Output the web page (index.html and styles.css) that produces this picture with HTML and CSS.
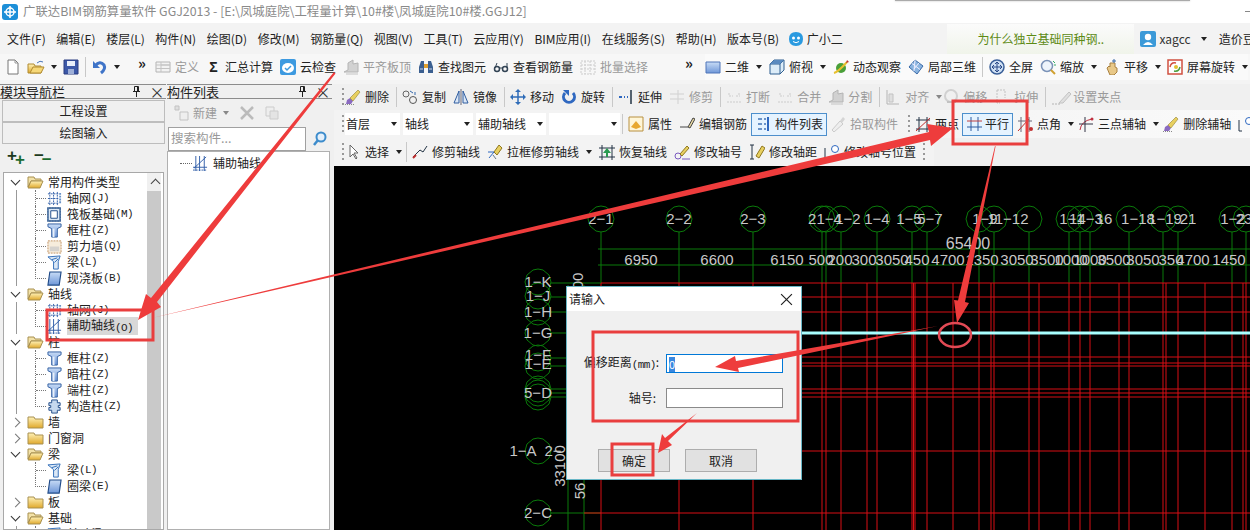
FILE: index.html
```html
<!DOCTYPE html>
<html lang="zh-CN">
<head>
<meta charset="utf-8">
<title>广联达BIM钢筋算量软件 GGJ2013</title>
<link rel="stylesheet" href="styles.css">
</head>
<body>
<svg class="defs" aria-hidden="true">
<defs>
<linearGradient id="gb" x1="0" y1="0" x2="0" y2="1"><stop offset="0" stop-color="#c8dcf6"/><stop offset="1" stop-color="#6f97d8"/></linearGradient>
<linearGradient id="gy" x1="0" y1="0" x2="0" y2="1"><stop offset="0" stop-color="#fff2b8"/><stop offset="1" stop-color="#e0a92c"/></linearGradient>
<symbol id="i-new" viewBox="0 0 16 16"><path d="M3 1h7l3 3v11H3z" fill="#fff" stroke="#777"/><path d="M10 1v3h3" fill="none" stroke="#999"/></symbol>
<symbol id="i-open" viewBox="0 0 18 16"><path d="M1 5h6l1 2h6v7H1z" fill="url(#gy)" stroke="#b08a30"/><path d="M3 14l3-6h11l-3 6z" fill="#f6d878" stroke="#b08a30"/><path d="M10 4q3-3 6-1" fill="none" stroke="#4a76b8"/></symbol>
<symbol id="i-save" viewBox="0 0 16 16"><path d="M1 1h14v14H1z" fill="#3c58a8" stroke="#2a3c80"/><path d="M4 2h8v5H4z" fill="#e8eefa"/><path d="M5 10h6v5H5z" fill="#9fb0d8"/></symbol>
<symbol id="i-undo" viewBox="0 0 16 16"><path d="M3 7q5-6 9-1 2 4-3 8" fill="none" stroke="#3f74c8" stroke-width="3"/><path d="M1 2v7h7z" fill="#3f74c8"/></symbol>
<symbol id="i-define" viewBox="0 0 16 16"><path d="M1 3h14v10H1z" fill="#f2f2f2" stroke="#aaa"/><path d="M6 3v10M1 6h14M1 9.500h14M6 6h9" stroke="#bbb" fill="none"/></symbol>
<symbol id="i-cloud" viewBox="0 0 16 16"><rect width="16" height="16" rx="2" fill="#3d9ae0"/><ellipse cx="8" cy="9" rx="6" ry="5" fill="#fff"/><path d="M5 9l2 2 4-4" fill="none" stroke="#3d9ae0" stroke-width="1.500"/></symbol>
<symbol id="i-flat" viewBox="0 0 16 16"><path d="M1 13l4-2v-7l5-3v4l5-1v9H1z" fill="#ccc" stroke="#aaa"/><path d="M3 15h12" stroke="#bbb"/></symbol>
<symbol id="i-bin" viewBox="0 0 16 16"><path d="M1 8l2-6h3v12H1zM15 8l-2-6h-3v12h5z" fill="#3b5f90"/><path d="M6 5h4v4H6z" fill="#e0a030"/><path d="M2 10h3M11 10h3" stroke="#cfd8e8"/></symbol>
<symbol id="i-look" viewBox="0 0 16 16"><circle cx="4" cy="10" r="2.500" fill="none" stroke="#345" stroke-width="1.500"/><circle cx="12" cy="10" r="2.500" fill="none" stroke="#345" stroke-width="1.500"/><path d="M6 9h4M14 9V4M2 9l2-5" fill="none" stroke="#345"/></symbol>
<symbol id="i-batch" viewBox="0 0 16 16"><path d="M1 2h14v13H1zM1 6h14M1 10h14M5 2v13M10 2v13" fill="none" stroke="#c6c6c6" stroke-dasharray="2 1"/></symbol>
<symbol id="i-2d" viewBox="0 0 16 16"><path d="M1 3h14v11H1z" fill="url(#gb)" stroke="#4f74b8"/></symbol>
<symbol id="i-cube" viewBox="0 0 16 16"><path d="M1 5l4-4h10v10l-4 4H1z" fill="#dcecf8" stroke="#2f5f90"/><path d="M1 5h10v10M11 5l4-4" fill="none" stroke="#2f5f90"/><path d="M5 1h10l-4 4H1z" fill="#5b8bc0"/></symbol>
<symbol id="i-orbit" viewBox="0 0 16 16"><circle cx="8" cy="9" r="5" fill="#4aa03a"/><path d="M1 14q4-1 13-11" fill="none" stroke="#e8c030" stroke-width="2"/><path d="M14 1l2 2-3 1z" fill="#c03030"/></symbol>
<symbol id="i-l3d" viewBox="0 0 16 16"><path d="M1 8l6-7 8 6-6 8z" fill="#8ab4e0" stroke="#3a6aa8"/><path d="M4 4.500l8 6M7 1l-1 11M11 4l-5 6" stroke="#eef" fill="none"/></symbol>
<symbol id="i-full" viewBox="0 0 16 16"><circle cx="8" cy="8" r="7" fill="#cfe0f4" stroke="#3a5f98" stroke-width="1.500"/><path d="M8 3v10M3 8h10M8 3l-2 2M8 3l2 2M8 13l-2-2M8 13l2-2M3 8l2-2M3 8l2 2M13 8l-2-2M13 8l-2 2" stroke="#2a4a88" fill="none"/></symbol>
<symbol id="i-zoom" viewBox="0 0 16 16"><circle cx="7" cy="7" r="5.500" fill="#eef4fb" stroke="#7b93b8" stroke-width="1.500"/><path d="M11 11l4 4" stroke="#d0a030" stroke-width="2"/><path d="M13 2l2 2M14 6h2" stroke="#3a6"/></symbol>
<symbol id="i-pan" viewBox="0 0 16 16"><path d="M3 9l2-2 1 1V4h5v4l2 1v4l-3 3H6z" fill="#e8c888" stroke="#a88040"/><path d="M10 0v4M8 2h4" stroke="#3a6aa8"/></symbol>
<symbol id="i-scr" viewBox="0 0 16 16"><rect x="1" y="1" width="14" height="14" fill="#fff" stroke="#d05040" stroke-width="1.500"/><path d="M3 8q1-5 6-4" fill="none" stroke="#d05040" stroke-width="1.500"/><path d="M13 8q-1 5-6 4" fill="none" stroke="#50a040" stroke-width="1.500"/><circle cx="9" cy="8" r="2" fill="#e0c030"/></symbol>
<symbol id="i-del" viewBox="0 0 16 16"><path d="M1 15l1-4 3-2 3 3-2 3z" fill="#8a6ac0"/><path d="M5 9l8-8 2 2-7 9z" fill="#e8d060" stroke="#807020" stroke-width=".5"/><path d="M0 15.500h10" stroke="#888" stroke-dasharray="1 1"/></symbol>
<symbol id="i-copy" viewBox="0 0 16 16"><circle cx="4" cy="5" r="3" fill="none" stroke="#666"/><circle cx="11" cy="11" r="3.500" fill="none" stroke="#555"/><path d="M8 2l3 2M13 3v3" stroke="#36a" fill="none"/></symbol>
<symbol id="i-mirror" viewBox="0 0 16 16"><path d="M1 14L6 2v12zM15 14L10 2v12z" fill="#dbe7f6" stroke="#2f5da0"/><path d="M8 0v16" stroke="#667"/></symbol>
<symbol id="i-move" viewBox="0 0 16 16"><path d="M8 1v14M1 8h14" stroke="#2f6cb8" stroke-width="1.500"/><path d="M8 0l-3 3h6zM8 16l-3-3h6zM0 8l3-3v6zM16 8l-3-3v6z" fill="#2f6cb8"/></symbol>
<symbol id="i-rot" viewBox="0 0 16 16"><path d="M4 4a5.500 5.500 0 1 0 8 0" fill="none" stroke="#2f68c0" stroke-width="3"/><path d="M2 1h6v6z" fill="#2f68c0"/></symbol>
<symbol id="i-ext" viewBox="0 0 16 16"><path d="M13 1v14" stroke="#234" stroke-width="1.500"/><path d="M1 7h3v2H1zM6 7h1v2H6zM9 7h1v2H9z" fill="#2f68c0"/></symbol>
<symbol id="i-trim" viewBox="0 0 16 16"><path d="M9 1v14M1 5h14M1 10h14" stroke="#ccc" fill="none"/></symbol>
<symbol id="i-brk" viewBox="0 0 16 16"><path d="M1 13h14M3 7h4M10 7h4M3 4v3M13 4v3" stroke="#c8c8c8" fill="none" stroke-dasharray="2 1"/></symbol>
<symbol id="i-align" viewBox="0 0 16 16"><path d="M2 1v14h12" fill="none" stroke="#aaa"/><path d="M4 5h4v8H4z" fill="#ddd" stroke="#bbb"/></symbol>
<symbol id="i-off" viewBox="0 0 16 16"><circle cx="8" cy="7" r="6" fill="none" stroke="#ccc" stroke-width="2"/><path d="M4 13h9" stroke="#bbb" stroke-width="2"/></symbol>
<symbol id="i-str" viewBox="0 0 16 16"><path d="M3 1h8v8M3 1v13h3" fill="none" stroke="#bbb" stroke-dasharray="2 1"/><path d="M9 12h6" stroke="#bbb"/></symbol>
<symbol id="i-grip" viewBox="0 0 22 16"><path d="M8 14l10-11 2 2-8 9z" fill="#ddd" stroke="#bbb"/><path d="M1 15h8" stroke="#aaa" stroke-dasharray="2 1"/></symbol>
<symbol id="i-prop" viewBox="0 0 16 16"><path d="M1 1h14v14H1z" fill="#fff6d8" stroke="#b89040"/><path d="M3 11l5-6 5 6-5 2z" fill="#e8a830"/></symbol>
<symbol id="i-bar" viewBox="0 0 16 16"><path d="M1 11h8M9 11l5-9 2 1-5 9z" fill="#e8d8a0" stroke="#444"/></symbol>
<symbol id="i-list" viewBox="0 0 16 16"><path d="M12 1v14" stroke="#2f68c0" stroke-width="2"/><path d="M2 2h4v2H2zM8 2h2v2H8zM2 7h4v2H2zM8 7h2v2H8zM2 12h4v2H2zM8 12h2v2H8z" fill="#6a93c8"/></symbol>
<symbol id="i-pick" viewBox="0 0 16 16"><path d="M2 14l8-9 3 3-9 8z" fill="#eee" stroke="#c4c4c4"/><path d="M10 5l3-4 2 2-3 4z" fill="#d0d0d0"/></symbol>
<symbol id="i-two" viewBox="0 0 16 16"><path d="M4 1v15M12 1v15M1 13h14M1 4h14" stroke="#234" fill="none"/><path d="M1 15L15 2" stroke="#c03030"/></symbol>
<symbol id="i-par" viewBox="0 0 16 16"><path d="M4 1v14M11 1v14" stroke="#2f5da0" fill="none"/><path d="M0 5h15" stroke="#c04040"/><path d="M0 11h15" stroke="#2f5da0"/></symbol>
<symbol id="i-ang" viewBox="0 0 16 16"><path d="M4 1v15M12 1v15M1 5h14" stroke="#667" fill="none"/><path d="M1 15L12 3" stroke="#c03030"/><circle cx="14" cy="13" r="2" fill="#c03030"/></symbol>
<symbol id="i-three" viewBox="0 0 16 16"><path d="M2 14q1-9 12-11" fill="none" stroke="#c03040"/><path d="M7 1v15M1 8h14" stroke="#334"/><circle cx="14" cy="3" r="1.500" fill="#c03040"/></symbol>
<symbol id="i-cur" viewBox="0 0 16 16"><path d="M5 1v12l3-3 3 5 1-1-3-5h4z" fill="#fff" stroke="#666"/></symbol>
<symbol id="i-cut" viewBox="0 0 16 16"><path d="M1 13l7-7 3 2 4-6" fill="none" stroke="#234"/><path d="M1 14l3-3" stroke="#c03030" stroke-width="2"/></symbol>
<symbol id="i-box" viewBox="0 0 16 16"><path d="M1 8h6M2 14l5-6" stroke="#2f68c0"/><path d="M7 8l5-7 3 3-5 7z" fill="#e8d060" stroke="#907820"/><path d="M6 11l3 4" stroke="#678"/></symbol>
<symbol id="i-res" viewBox="0 0 16 16"><path d="M3 1v15M13 1v15M0 4h16M0 13h16" stroke="#234" fill="none"/><path d="M8 4l4 5H9v4H7V9H4z" fill="#2a9a50"/></symbol>
<symbol id="i-num" viewBox="0 0 16 16"><circle cx="4" cy="12" r="3" fill="none" stroke="#7a5ac0"/><path d="M6 10l7-8 2 2-7 8z" fill="#e8d060" stroke="#907820"/><path d="M8 15h8" stroke="#7a5ac0"/></symbol>
<symbol id="i-dist" viewBox="0 0 16 16"><path d="M1 1h4M1 15h4M3 1v14" stroke="#234"/><path d="M7 12l6-10 3 2-6 10z" fill="#e8d060" stroke="#907820"/></symbol>
<symbol id="i-npos" viewBox="0 0 16 16"><path d="M1 4v11h3" fill="none" stroke="#234"/><circle cx="11" cy="5" r="3.500" fill="#fff" stroke="#2f68c0"/></symbol>
<symbol id="i-add" viewBox="0 0 16 16"><path d="M2 1h4v4H2z" fill="#ddd" stroke="#bbb"/><path d="M7 7h8v8H7z" fill="#eee" stroke="#bbb"/></symbol>
<symbol id="i-x" viewBox="0 0 16 16"><path d="M2 2l12 12M14 2L2 14" stroke="#bbb" stroke-width="2.500"/></symbol>
<symbol id="i-dup" viewBox="0 0 16 16"><path d="M2 2h8v9H2z" fill="#eee" stroke="#ccc"/><path d="M6 6h8v8H6z" fill="#e4e4e4" stroke="#ccc"/></symbol>
<symbol id="i-search" viewBox="0 0 16 16"><circle cx="9" cy="6" r="4.500" fill="#e4f0fb" stroke="#3d8ccc" stroke-width="2"/><path d="M6 9l-4 5" stroke="#3d8ccc" stroke-width="2.500"/></symbol>
<symbol id="i-pin" viewBox="0 0 9 11"><path d="M2.500.5h4v5h-4zM1 5.500h7M4.500 6v5M5.500 1v4" fill="none" stroke="#222"/></symbol>
<symbol id="t-grid" viewBox="0 0 16 16"><path d="M1 3h12M1 8h12M1 13h12M3 1v14M7 1v14M11 1v14" stroke="#2f5da8" stroke-dasharray="2 1" fill="none"/><path d="M14 2v12" stroke="#6a93c8" stroke-width="2" stroke-dasharray="2 1"/></symbol>
<symbol id="t-axis" viewBox="0 0 16 16"><path d="M3 0v16M7 0v16M12 0v16M0 12h15" stroke="#2f5da8" fill="none"/><path d="M1 13L14 1" stroke="#2f5da8"/><path d="M0 15h15" stroke="#2f5da8" stroke-dasharray="2 1"/></symbol>
<symbol id="t-raft" viewBox="0 0 16 16"><path d="M1 1h13v14H1z" fill="#dbe8f6" stroke="#1f4a88" stroke-width="1.500"/><path d="M4 4h7v8H4z" fill="#fff" stroke="#1f4a88"/><path d="M1 1h13v14H1z" fill="none" stroke="#8ab" stroke-dasharray="1 2"/></symbol>
<symbol id="t-col" viewBox="0 0 16 16"><path d="M1 1h14v3l-4 2v9H5V6L1 4z" fill="url(#gb)" stroke="#2f5da0"/><path d="M7 6v9" stroke="#e8f0fa" stroke-width="2"/></symbol>
<symbol id="t-wall" viewBox="0 0 16 16"><path d="M1 2h14v13H1z" fill="#f6ecdc" stroke="#c09060" stroke-dasharray="2 1"/><path d="M3 8h10v5H3z" fill="#c8c8c8" opacity=".7"/></symbol>
<symbol id="t-beam" viewBox="0 0 16 16"><path d="M1 2l13-1-2 6v8H7V7z" fill="#dbe8f6" stroke="#2f6cb8"/><path d="M5 5l6-2M8 8l4-4" stroke="#2f6cb8"/></symbol>
<symbol id="t-slab" viewBox="0 0 16 16"><path d="M3 1h12l-2 14H1z" fill="url(#gb)" stroke="#1f4a88" stroke-width="1.200"/></symbol>
<symbol id="t-con" viewBox="0 0 16 16"><path d="M5 1h6v3h3v3h-2v2h2v3h-3v3H5v-3H2V9h2V7H2V4h3z" fill="#c6d8ee" stroke="#1f4a88"/></symbol>
<symbol id="t-fo" viewBox="0 0 17 14"><path d="M1 2h6l1 2h6v2H4L1 12z" fill="#f3e2a8" stroke="#a89050"/><path d="M1 13l3-7h12l-3 7z" fill="url(#gy)" stroke="#a89050"/></symbol>
<symbol id="t-fc" viewBox="0 0 17 14"><path d="M1 2h6l1 2h8v9H1z" fill="url(#gy)" stroke="#a89050"/></symbol>
<symbol id="bub" viewBox="0 0 26 26" overflow="visible"><path d="M8 1l5-1 5 1 6 5 2 7-2 7-6 5-5 1-5-1-6-5-2-7 2-7z" fill="none" stroke="#0a7a0a"/></symbol>
</defs>
</svg>

<div class="window">
<header class="titlebar">
  <svg class="app-logo" viewBox="0 0 16 16"><rect width="16" height="16" rx="3" fill="#1c8fd8"/><circle cx="8" cy="8" r="4" fill="none" stroke="#fff" stroke-width="1.500"/><path d="M8 2v12M2 8h12" stroke="#fff" stroke-width="1.500"/></svg>
  <span>广联达BIM钢筋算量软件 GGJ2013 - [E:\凤城庭院\工程量计算\10#楼\凤城庭院10#楼.GGJ12]</span>
  <i class="window-shadow"></i>
  <i class="minimize"></i>
</header>

<nav class="menubar">
  <span class="m">文件(F)</span><span class="m">编辑(E)</span><span class="m">楼层(L)</span><span class="m">构件(N)</span><span class="m">绘图(D)</span><span class="m">修改(M)</span><span class="m">钢筋量(Q)</span><span class="m">视图(V)</span><span class="m">工具(T)</span><span class="m">云应用(Y)</span><span class="m">BIM应用(I)</span><span class="m">在线服务(S)</span><span class="m">帮助(H)</span><span class="m">版本号(B)</span>
  <span class="m helper"><svg class="ic" viewBox="0 0 16 16"><path d="M1 8q0-7 7-7t7 7-7 7-7-7z" fill="#2a9ae0"/><circle cx="5.500" cy="7" r="1.500" fill="#fff"/><circle cx="10.500" cy="7" r="1.500" fill="#fff"/><path d="M5 10.500q3 2.500 6 0" stroke="#fff" fill="none"/></svg>广小二</span>
  <span class="news">为什么独立基础同种钢..</span>
  <svg class="user-ic" viewBox="0 0 16 16"><rect width="16" height="16" rx="2" fill="#3c9ad8"/><circle cx="8" cy="6" r="3.200" fill="#fff"/><path d="M3 14q5-6 10 0z" fill="#fff"/></svg>
  <span class="user">xagcc</span><i class="caret"></i><span class="bean">造价豆</span>
</nav>

<div class="toolbar">
  <svg class="ic"><use href="#i-new"/></svg>
  <svg class="ic open"><use href="#i-open"/></svg><i class="caret"></i>
  <svg class="ic save"><use href="#i-save"/></svg>
  <i class="sep"></i>
  <svg class="ic"><use href="#i-undo"/></svg><i class="caret"></i>
  <b class="more">»</b>
  <div class="tgroup g1">
    <span class="tool off"><svg class="ic"><use href="#i-define"/></svg>定义</span>
    <span class="tool"><b class="sigma">Σ</b>汇总计算</span>
    <span class="tool"><svg class="ic"><use href="#i-cloud"/></svg>云检查</span>
    <span class="tool off"><svg class="ic"><use href="#i-flat"/></svg>平齐板顶</span>
    <span class="tool"><svg class="ic"><use href="#i-bin"/></svg>查找图元</span>
    <span class="tool"><svg class="ic"><use href="#i-look"/></svg>查看钢筋量</span>
    <span class="tool off"><svg class="ic"><use href="#i-batch"/></svg>批量选择</span>
  </div>
  <b class="more m2">»</b>
  <div class="tgroup g2">
    <span class="tool"><svg class="ic"><use href="#i-2d"/></svg>二维</span><i class="caret"></i>
    <span class="tool"><svg class="ic"><use href="#i-cube"/></svg>俯视</span><i class="caret"></i>
    <span class="tool"><svg class="ic"><use href="#i-orbit"/></svg>动态观察</span>
    <span class="tool"><svg class="ic"><use href="#i-l3d"/></svg>局部三维</span>
    <i class="sep"></i>
    <span class="tool"><svg class="ic"><use href="#i-full"/></svg>全屏</span>
    <span class="tool"><svg class="ic"><use href="#i-zoom"/></svg>缩放</span><i class="caret"></i>
    <span class="tool"><svg class="ic"><use href="#i-pan"/></svg>平移</span><i class="caret"></i>
    <span class="tool"><svg class="ic"><use href="#i-scr"/></svg>屏幕旋转</span><i class="caret"></i>
  </div>
</div>

<main class="main">
  <section class="nav">
    <div class="pane-head"><span>模块导航栏</span><svg class="pin"><use href="#i-pin"/></svg><span class="close">×</span></div>
    <button class="navbtn">工程设置</button>
    <button class="navbtn">绘图输入</button>
    <div class="treetools"><span class="pm">+<sub>+</sub></span><span class="pm">−<sub>−</sub></span></div>
    <div class="treebox">
      <div class="tree">
        <div class="row group open-g"><i class="chev down"></i><svg class="fold"><use href="#t-fo"/></svg>常用构件类型</div>
        <div class="row leaf v"><i class="guide"></i><svg class="ti"><use href="#t-grid"/></svg>轴网<em>(J)</em></div>
        <div class="row leaf v"><i class="guide"></i><svg class="ti"><use href="#t-raft"/></svg>筏板基础<em>(M)</em></div>
        <div class="row leaf v"><i class="guide"></i><svg class="ti"><use href="#t-col"/></svg>框柱<em>(Z)</em></div>
        <div class="row leaf v"><i class="guide"></i><svg class="ti"><use href="#t-wall"/></svg>剪力墙<em>(Q)</em></div>
        <div class="row leaf v"><i class="guide"></i><svg class="ti"><use href="#t-beam"/></svg>梁<em>(L)</em></div>
        <div class="row leaf v last"><i class="guide"></i><svg class="ti"><use href="#t-slab"/></svg>现浇板<em>(B)</em></div>
        <div class="row group"><i class="chev down"></i><svg class="fold"><use href="#t-fo"/></svg>轴线</div>
        <div class="row leaf v"><i class="guide"></i><svg class="ti"><use href="#t-grid"/></svg>轴网<em>(J)</em></div>
        <div class="row leaf v last"><i class="guide"></i><svg class="ti"><use href="#t-axis"/></svg><span class="sel">辅助轴线<em>(O)</em></span></div>
        <div class="row group"><i class="chev down"></i><svg class="fold"><use href="#t-fo"/></svg>柱</div>
        <div class="row leaf v"><i class="guide"></i><svg class="ti"><use href="#t-col"/></svg>框柱<em>(Z)</em></div>
        <div class="row leaf v"><i class="guide"></i><svg class="ti"><use href="#t-col"/></svg>暗柱<em>(Z)</em></div>
        <div class="row leaf v"><i class="guide"></i><svg class="ti"><use href="#t-col"/></svg>端柱<em>(Z)</em></div>
        <div class="row leaf v last"><i class="guide"></i><svg class="ti"><use href="#t-con"/></svg>构造柱<em>(Z)</em></div>
        <div class="row group"><i class="chev"></i><svg class="fold"><use href="#t-fc"/></svg>墙</div>
        <div class="row group"><i class="chev"></i><svg class="fold"><use href="#t-fc"/></svg>门窗洞</div>
        <div class="row group"><i class="chev down"></i><svg class="fold"><use href="#t-fo"/></svg>梁</div>
        <div class="row leaf"><i class="guide"></i><svg class="ti"><use href="#t-beam"/></svg>梁<em>(L)</em></div>
        <div class="row leaf last"><i class="guide"></i><svg class="ti"><use href="#t-slab"/></svg>圈梁<em>(E)</em></div>
        <div class="row group"><i class="chev"></i><svg class="fold"><use href="#t-fc"/></svg>板</div>
        <div class="row group"><i class="chev down"></i><svg class="fold"><use href="#t-fo"/></svg>基础</div>
        <div class="row leaf v"><i class="guide"></i><svg class="ti"><use href="#t-beam"/></svg>基础梁<em>(F)</em></div>
      </div>
      <div class="scroll"><span class="up"></span></div>
    </div>
  </section>

  <section class="list">
    <div class="pane-head"><span>构件列表</span><svg class="pin"><use href="#i-pin"/></svg><span class="close">×</span></div>
    <div class="listtools">
      <span class="tool off"><svg class="ic"><use href="#i-add"/></svg>新建</span><i class="caret grey"></i>
      <svg class="ic lx"><use href="#i-x"/></svg>
      <svg class="ic"><use href="#i-dup"/></svg>
    </div>
    <div class="searchrow"><div class="search">搜索构件...</div><svg class="ic"><use href="#i-search"/></svg></div>
    <div class="listbody"><div class="litem"><i class="dots"></i><svg class="ti"><use href="#t-axis"/></svg>辅助轴线</div></div>
  </section>

  <section class="work">
    <div class="wrow r1">
      <i class="handle"></i>
      <span class="tool"><svg class="ic"><use href="#i-del"/></svg>删除</span><i class="sep"></i>
      <span class="tool"><svg class="ic"><use href="#i-copy"/></svg>复制</span>
      <span class="tool"><svg class="ic"><use href="#i-mirror"/></svg>镜像</span><i class="sep"></i>
      <span class="tool"><svg class="ic"><use href="#i-move"/></svg>移动</span>
      <span class="tool"><svg class="ic"><use href="#i-rot"/></svg>旋转</span><i class="sep"></i>
      <span class="tool"><svg class="ic"><use href="#i-ext"/></svg>延伸</span>
      <span class="tool off"><svg class="ic"><use href="#i-trim"/></svg>修剪</span><i class="sep"></i>
      <span class="tool off"><svg class="ic"><use href="#i-brk"/></svg>打断</span>
      <span class="tool off"><svg class="ic"><use href="#i-brk"/></svg>合并</span>
      <span class="tool off"><svg class="ic"><use href="#i-flat"/></svg>分割</span><i class="sep"></i>
      <span class="tool off"><svg class="ic"><use href="#i-align"/></svg>对齐</span><i class="caret grey"></i>
      <span class="tool off"><svg class="ic"><use href="#i-off"/></svg>偏移</span>
      <span class="tool off"><svg class="ic"><use href="#i-str"/></svg>拉伸</span><i class="sep"></i>
      <span class="tool off wide"><svg class="ic w22"><use href="#i-grip"/></svg>设置夹点</span>
    </div>
    <div class="wrow r2">
      <i class="handle"></i>
      <div class="combo c1"><span>首层</span><i class="caret"></i></div>
      <div class="combo c2"><span>轴线</span><i class="caret"></i></div>
      <div class="combo c3"><span>辅助轴线</span><i class="caret"></i></div>
      <div class="combo c4"><span></span><i class="caret"></i></div>
      <i class="sep"></i>
      <span class="tool"><svg class="ic"><use href="#i-prop"/></svg>属性</span>
      <span class="tool"><svg class="ic"><use href="#i-bar"/></svg>编辑钢筋</span>
      <span class="tool active list-btn"><svg class="ic"><use href="#i-list"/></svg>构件列表</span>
      <span class="tool off"><svg class="ic"><use href="#i-pick"/></svg>拾取构件</span>
      <i class="handle"></i>
      <span class="tool"><svg class="ic"><use href="#i-two"/></svg>两点</span>
      <span class="tool active par-btn"><svg class="ic"><use href="#i-par"/></svg>平行</span>
      <span class="tool"><svg class="ic"><use href="#i-ang"/></svg>点角</span><i class="caret"></i>
      <span class="tool"><svg class="ic"><use href="#i-three"/></svg>三点辅轴</span><i class="caret"></i>
      <span class="tool"><svg class="ic"><use href="#i-del"/></svg>删除辅轴</span>
      <svg class="ic"><use href="#i-npos"/></svg>
    </div>
    <div class="wrow r3">
      <i class="handle"></i>
      <span class="tool"><svg class="ic"><use href="#i-cur"/></svg>选择</span><i class="caret"></i><i class="sep"></i>
      <span class="tool"><svg class="ic"><use href="#i-cut"/></svg>修剪轴线</span>
      <span class="tool"><svg class="ic"><use href="#i-box"/></svg>拉框修剪轴线</span><i class="caret"></i>
      <span class="tool"><svg class="ic"><use href="#i-res"/></svg>恢复轴线</span>
      <span class="tool"><svg class="ic"><use href="#i-num"/></svg>修改轴号</span>
      <span class="tool"><svg class="ic"><use href="#i-dist"/></svg>修改轴距</span>
      <span class="tool"><svg class="ic"><use href="#i-npos"/></svg>修改轴号位置</span>
      <i class="handle"></i>
    </div>
    <svg class="cad" viewBox="334 166 916 364">
      <path class="gl" d="M601 232V283M679 232V283M753 232V283M822 232V283M826 232V283M841 232V283M877 232V283M912 232V283M927 232V283M979 232V283M994 232V283M1029 232V283M1069 232V283M1080 232V283M1090 232V283M1129 232V283M1163 232V283M1178 232V283M1232 232V283M1246 232V283M598 249H1250M598 265H1250M568 285V530M584 285V530M551 283H601M551 297H566M551 312H566M551 333H566M551 358H566M551 366H566M551 389H566M551 393H566M551 397H566M551 513H601"/>
      <path class="rl" d="M601 283V530M679 283V530M753 283V530M822 283V530M826 283V530M841 283V530M867 283V530M877 283V530M912 283V530M913.500 283V530M915 283V530M927 283V530M953 283V530M979 283V530M991 283V530M994 283V530M1029 283V530M1039 283V530M1069 283V530M1080 283V530M1090 283V530M1119 283V530M1129 283V530M1163 283V530M1166 283V530M1178 283V530M1205 283V530M1232 283V530M1243 283V530M1246 283V530M601 283H1250M601 297H1250M601 312H1250M601 357H1250M601 363H1250M601 366H1250M601 389H1250M601 393H1250M601 397H1250M601 451H1250M584 513H1250"/>
      <path class="cy" d="M566 333H1250"/>
      <g>
        <use href="#bub" x="588" y="206" width="26" height="26"/><use href="#bub" x="666" y="206" width="26" height="26"/><use href="#bub" x="740" y="206" width="26" height="26"/><use href="#bub" x="809" y="206" width="26" height="26"/><use href="#bub" x="813" y="206" width="26" height="26"/><use href="#bub" x="828" y="206" width="26" height="26"/><use href="#bub" x="864" y="206" width="26" height="26"/><use href="#bub" x="899" y="206" width="26" height="26"/><use href="#bub" x="914" y="206" width="26" height="26"/><use href="#bub" x="966" y="206" width="26" height="26"/><use href="#bub" x="981" y="206" width="26" height="26"/><use href="#bub" x="1016" y="206" width="26" height="26"/><use href="#bub" x="1056" y="206" width="26" height="26"/><use href="#bub" x="1067" y="206" width="26" height="26"/><use href="#bub" x="1077" y="206" width="26" height="26"/><use href="#bub" x="1116" y="206" width="26" height="26"/><use href="#bub" x="1150" y="206" width="26" height="26"/><use href="#bub" x="1165" y="206" width="26" height="26"/><use href="#bub" x="1219" y="206" width="26" height="26"/><use href="#bub" x="1233" y="206" width="26" height="26"/>
        <use href="#bub" x="525" y="269" width="26" height="26"/><use href="#bub" x="525" y="283" width="26" height="26"/><use href="#bub" x="525" y="299" width="26" height="26"/><use href="#bub" x="525" y="320" width="26" height="26"/><use href="#bub" x="525" y="345" width="26" height="26"/><use href="#bub" x="525" y="353" width="26" height="26"/><use href="#bub" x="525" y="376" width="26" height="26"/><use href="#bub" x="525" y="380" width="26" height="26"/><use href="#bub" x="525" y="384" width="26" height="26"/><use href="#bub" x="525" y="438" width="26" height="26"/><use href="#bub" x="525" y="500" width="26" height="26"/>
      </g>
      <g class="cadt">
        <text x="601" y="224">2−1</text><text x="679" y="224">2−2</text><text x="753" y="224">2−3</text><text x="825" y="224">21−4</text><text x="848" y="224">1−2</text><text x="877" y="224">1−4</text><text x="909" y="224">1−5</text><text x="930" y="224">5−7</text><text x="985" y="224">1−9</text><text x="1008" y="224">11−12</text><text x="1072" y="224">1−1</text><text x="1086" y="224">14−3</text><text x="1104" y="224">16</text><text x="1138" y="224">1−18</text><text x="1165" y="224">1−19</text><text x="1188" y="224">21</text><text x="1233" y="224">1−2</text><text x="1244" y="224">23</text>
        <text x="641" y="265">6950</text><text x="717" y="265">6600</text><text x="787" y="265">6150</text><text x="821" y="265">500</text><text x="840" y="265">200</text><text x="864" y="265">300</text><text x="892" y="265">3050</text><text x="917" y="265">450</text><text x="948" y="265">4700</text><text x="982" y="265">1350</text><text x="1017" y="265">3050</text><text x="1047" y="265">3500</text><text x="1071" y="265">1000</text><text x="1090" y="265">1000</text><text x="1114" y="265">3500</text><text x="1143" y="265">3050</text><text x="1171" y="265">350</text><text x="1193" y="265">4700</text><text x="1229" y="265">1450</text>
        <text x="968" y="249" class="big">65400</text>
        <text x="538" y="287">1−K</text><text x="538" y="301">1−J</text><text x="538" y="317">1−H</text><text x="538" y="338">1−G</text><text x="538" y="360">1−F</text><text x="538" y="369">1−E</text><text x="538" y="398">5−D</text>
        <text x="523" y="456">1−A</text><text x="553" y="456">2−</text><text x="538" y="518">2−C</text>
        <text transform="translate(583 281) rotate(-90)">00</text><text transform="translate(565 466) rotate(-90)">33100</text><text transform="translate(585 491) rotate(-90)">56</text>
      </g>
    </svg>
  </section>
</main>

<div class="dialog">
  <div class="dlg-title"><span>请输入</span><svg class="dlg-x" viewBox="0 0 12 12"><path d="M1 1l10 10M11 1L1 11" stroke="#222" stroke-width="1.100"/></svg></div>
  <div class="dlg-body">
    <div class="field f1"><label>偏移距离<em>(mm)</em>:</label><div class="inp focus"><span class="selected">0</span></div></div>
    <div class="field f2"><label>轴号:</label><div class="inp"></div></div>
    <div class="dlg-btns"><button class="dbtn">确定</button><button class="dbtn">取消</button></div>
  </div>
</div>

<svg class="marks" viewBox="0 0 1250 530" aria-hidden="true">
  <g class="box">
    <rect x="47" y="310" width="106" height="30"/><rect x="953" y="101" width="74" height="43"/><rect x="593" y="332" width="205" height="89"/><rect x="612" y="444" width="41" height="31"/>
  </g>
  <ellipse class="ring" cx="955" cy="335" rx="16" ry="12"/>
  <path class="arrow" d="M334 72L335.500 73.500L157 302L161 307L138 320L146 294L151 298Z"/>
  <path class="arrow" d="M152 318L929 132L927 124L953 128L931 146L930 140Z"/>
  <path class="arrow" d="M995 146L995.600 146.300L965 302L969 303L957 323L954 300L958 300.500Z"/>
  <path class="arrow" d="M938 326L738 368L739 372L715 367L735 356L736 361Z"/>
  <path class="arrow" d="M697 413L668 441L672 445L658 453L662 434L665 438Z"/>
</svg>
</div>
</body>
</html>
```

FILE: styles.css
```css
* { box-sizing: border-box; }
html, body { margin: 0; padding: 0; }
body { width: 1250px; height: 530px; overflow: hidden; background: #f4f4f4; font: 12px/16px "Noto Sans CJK SC", "Liberation Sans", sans-serif; color: #222; }
em { font-style: normal; font-family: "Liberation Mono", monospace; font-size: 11px; letter-spacing: -.6px; vertical-align: -.5px; }
.defs { width: 0; height: 0; display: block; overflow: hidden; }
.window { position: relative; width: 1250px; height: 530px; display: flex; flex-direction: column; overflow: hidden; }

.titlebar { height: 23px; flex: none; background: #fff; color: #8a8a8a; font-size: 12.400px; line-height: 23px; display: flex; align-items: center; padding-left: 2px; gap: 5px; position: relative; }
.app-logo { width: 16px; height: 16px; }
.window-shadow { position: absolute; left: 895px; top: 0; width: 295px; height: 1px; background: #aaa; box-shadow: 0 0 2px #aaa; }
.minimize { position: absolute; left: 1245px; top: 11px; width: 6px; height: 1px; background: #888; }

.menubar { height: 31px; flex: none; background: #f3f3f3; display: flex; align-items: center; padding-left: 7px; gap: 10.600px; font-size: 12px; }
.m { white-space: nowrap; }
.helper { display: flex; align-items: center; gap: 3px; margin-left: -2px; }
.news { width: 187px; height: 30px; margin-left: 94px; background: linear-gradient(#fbfbfb, #f0f4ea); color: #5c8a14; text-align: center; line-height: 30px; white-space: nowrap; flex: none; }
.user-ic { width: 16px; height: 16px; margin-left: -5px; flex: none; }
.user { margin-left: -7px; color: #333; }
.bean { margin-left: 1px; white-space: nowrap; flex: none; }

.ic { width: 16px; height: 16px; flex: none; display: block; }
.ic.w22 { width: 22px; }
.caret { flex: none; width: 0; height: 0; border: 3.500px solid transparent; border-top: 4px solid #222; border-bottom: 0; }
.caret.grey { border-top-color: #888; }
.sep { flex: none; width: 1px; height: 20px; background: #c8c8c8; }
.handle { flex: none; width: 2px; height: 18px; background: repeating-linear-gradient(#999 0 2px, transparent 2px 5px); }
.tool { display: flex; align-items: center; gap: 4px; white-space: nowrap; flex: none; }
.tool.off { color: #9a9a9a; }
.tool.off .ic { opacity: .85; }

.toolbar { height: 26px; flex: none; background: #f7f7f7; display: flex; align-items: center; padding-left: 5px; gap: 6px; }
.toolbar .open { width: 18px; }
.more { font-size: 15px; line-height: 14px; align-self: flex-start; margin-top: 2px; margin-left: 12px; font-weight: 700; }
.tgroup { display: flex; align-items: center; gap: 7px; height: 26px; }
.g1 { margin-left: 3px; }
.m2 { margin-left: 31px; }
.g2 { background: #fafafa; margin-left: 6px; gap: 7px; }
.g2 .sep { margin: 0 -1px; }
.g2 .caret:nth-last-child(3) { margin-right: -1px; }
.sigma { width: 15px; text-align: center; font-family: "Liberation Sans", sans-serif; font-size: 14px; }

.main { flex: 1; display: flex; margin-top: 4px; min-height: 0; background: #f0f0f0; }

.nav { width: 166px; flex: none; display: flex; flex-direction: column; background: #f0f0f0; }
.list { width: 165px; flex: none; margin-left: 1px; display: flex; flex-direction: column; background: #f0f0f0; }
.pane-head { height: 15px; flex: none; display: flex; align-items: center; font-size: 13px; line-height: 13px; border: 1px solid #8c8c8c; border-width: 1px 0; position: relative; background: #f0f0f0; }
.pane-head > span:first-child { flex: 1; }
.pin { width: 9px; height: 11px; flex: none; margin-right: 7px; }
.close { width: 18px; text-align: center; font-size: 15px; color: #333; }

.navbtn { display: block; flex: none; margin: 0 0 0 2px; width: 163px; height: 22px; padding: 0; font: inherit; color: #222; background: #f0f0f0; border: 1px solid #bdbdbd; }
.navbtn:first-of-type { margin-top: 1px; }
.treetools { height: 28px; flex: none; display: flex; align-items: center; padding-left: 7px; gap: 9px; }
.pm { font: 700 17px/12px "Liberation Sans", sans-serif; color: #1c3a20; display: flex; }
.pm sub { font-size: 17px; line-height: 12px; margin: 4px 0 0 -2px; vertical-align: baseline; color: #1c6a30; }
.treebox { flex: 1; min-height: 0; margin-left: 3px; width: 161px; display: flex; background: #fff; border: 1px solid #a8a8a8; overflow: hidden; }
.tree { width: 143px; flex: none; padding-top: 1px; }
.row { height: 16px; display: flex; align-items: center; white-space: nowrap; }
.group { padding-left: 8px; }
.chev { width: 7px; height: 7px; flex: none; border: solid #777; border-width: 0 1.500px 1.500px 0; transform: rotate(-45deg); margin-right: 8px; margin-left: 0; }
.chev.down { transform: translateY(-2px) rotate(45deg); border-color: #333; }
.fold { width: 17px; height: 14px; flex: none; margin-right: 4px; }
.leaf { padding-left: 31px; }
.leaf.v { background: linear-gradient(#999, #999) 12px 0 / 1px 100% no-repeat; }
.guide { width: 11px; height: 16px; flex: none; margin-right: 1px; border-left: 1px dotted #777; position: relative; }
.guide::after { content: ""; display: block; height: 8px; border-bottom: 1px dotted #777; }
.leaf.last .guide { border-left-color: transparent; }
.leaf.last .guide::after { border-left: 1px dotted #777; margin-left: -1px; }
.ti { width: 15px; height: 15px; flex: none; margin-right: 5px; display: block; }
.sel { background: #d8d8d8; padding-right: 5px; }
.scroll { flex: 1; background: #c9c9c9; margin-right: 2px; }
.up { display: block; height: 18px; background: #f0f0f0; position: relative; }
.up::after { content: ""; display: block; width: 6px; height: 6px; border: solid #444; border-width: 1.500px 0 0 1.500px; transform: translate(5px, 7px) rotate(45deg); }

.listtools { height: 28px; flex: none; display: flex; align-items: center; padding-left: 6px; gap: 6px; }
.lx { margin-left: 4px; }
.lx + .ic { margin-left: 3px; }
.searchrow { height: 24px; flex: none; display: flex; align-items: center; gap: 6px; }
.search { width: 138px; height: 24px; margin-left: 1px; background: #fff; border: 1px solid #a0a0a0; color: #999; font-size: 12.500px; line-height: 20px; padding-left: 2px; }
.listbody { flex: 1; background: #fff; border: 1px solid #b0b0b0; padding-top: 3px; margin-right: 2px; }
.litem { height: 16px; display: flex; align-items: center; padding-left: 12px; white-space: nowrap; }
.dots { width: 12px; height: 1px; border-top: 1px dotted #666; margin-right: 1px; }

.work { flex: 1; min-width: 0; display: flex; flex-direction: column; margin-left: 2px; }
.wrow { flex: none; display: flex; align-items: center; white-space: nowrap; gap: 7px; padding-left: 8px; }
.wrow .sep { margin-right: -2px; }
.wrow > .handle:first-child + .tool { margin-left: -6px; }
.r1 { height: 26px; width: 791px; background: #f0f0f0; }
.r1 > .caret { margin-right: -6px; }
.r2 { height: 28px; background: linear-gradient(to right, #f3f3f3 60%, #fafafa); }
.r2 > .sep { margin-left: -5px; }
.r2 > .tool + .handle { margin: 0 -2px 0 3px; }
.r2 > .caret { margin-right: -3px; }
.r3 { height: 28px; width: 600px; background: #f3f3f3; }
.r3 > .sep { margin-left: -3px; }
.wrow .w22 { margin-right: -4px; }
.combo { flex: none; display: flex; align-items: center; justify-content: space-between; background: #fff; height: 22px; margin-left: -4px; padding-left: 1px; }
.combo .caret { margin-right: 3px; }
.c1 { width: 55px; margin-left: -6px; }
.c2 { width: 70px; padding-left: 2px; }
.c3 { width: 70px; padding-left: 2px; }
.c4 { width: 71px; }
.active { height: 23px; background: #e5f3ff; border: 1px solid #4d8fcc; padding: 0 3px 0 4px; }
.list-btn { gap: 3px; margin: 0 -4px 0 -3px; }
.par-btn { gap: 2px; margin: 0 -3px 0 -4px; }
.cad { flex: 1; min-height: 0; width: 916px; display: block; background: #000; }
.gl { fill: none; stroke: #0a7a0a; stroke-width: 1; }
.rl { fill: none; stroke: #d80f14; stroke-width: 1; }
.cy { stroke: #a8ffff; stroke-width: 3; }
.cadt text { fill: #c8c8c8; font: 15px "Liberation Sans", sans-serif; text-anchor: middle; }
.cadt .big { font-size: 16px; }

.dialog { position: absolute; left: 566px; top: 286px; width: 236px; height: 194px; display: flex; flex-direction: column; background: #f0f0f0; border: 1px solid #67b6c6; }
.dlg-title { height: 24px; flex: none; background: #fff; display: flex; align-items: center; justify-content: space-between; padding: 0 8px 0 2px; }
.dlg-x { width: 13px; height: 13px; }
.dlg-body { flex: 1; display: flex; flex-direction: column; }
.field { display: flex; align-items: center; justify-content: flex-end; padding-right: 18px; }
.field label { white-space: nowrap; }
.f1 { margin-top: 43px; height: 19px; gap: 7px; }
.f2 { margin-top: 15px; height: 20px; gap: 10px; }
.inp { width: 117px; height: 100%; background: #fff; border: 1px solid #8a8a8a; padding: 1px 2px; line-height: 15px; }
.inp.focus { border-color: #0078d7; }
.selected { display: inline-block; background: #3a88e0; color: #fff; width: 6px; height: 15px; text-align: center; font-size: 11px; }
.dlg-btns { display: flex; gap: 15px; margin-top: 41px; padding-left: 31px; }
.dbtn { width: 72px; height: 23px; padding: 0; font: inherit; color: #222; background: #e1e1e1; border: 1px solid #adadad; }

.marks { position: absolute; left: 0; top: 0; width: 1250px; height: 530px; pointer-events: none; }
.box rect { fill: none; stroke: #e93e3e; stroke-width: 3; }
.ring { fill: none; stroke: #e24a55; stroke-width: 2.500; }
.arrow { fill: #ee3c3c; }
```
